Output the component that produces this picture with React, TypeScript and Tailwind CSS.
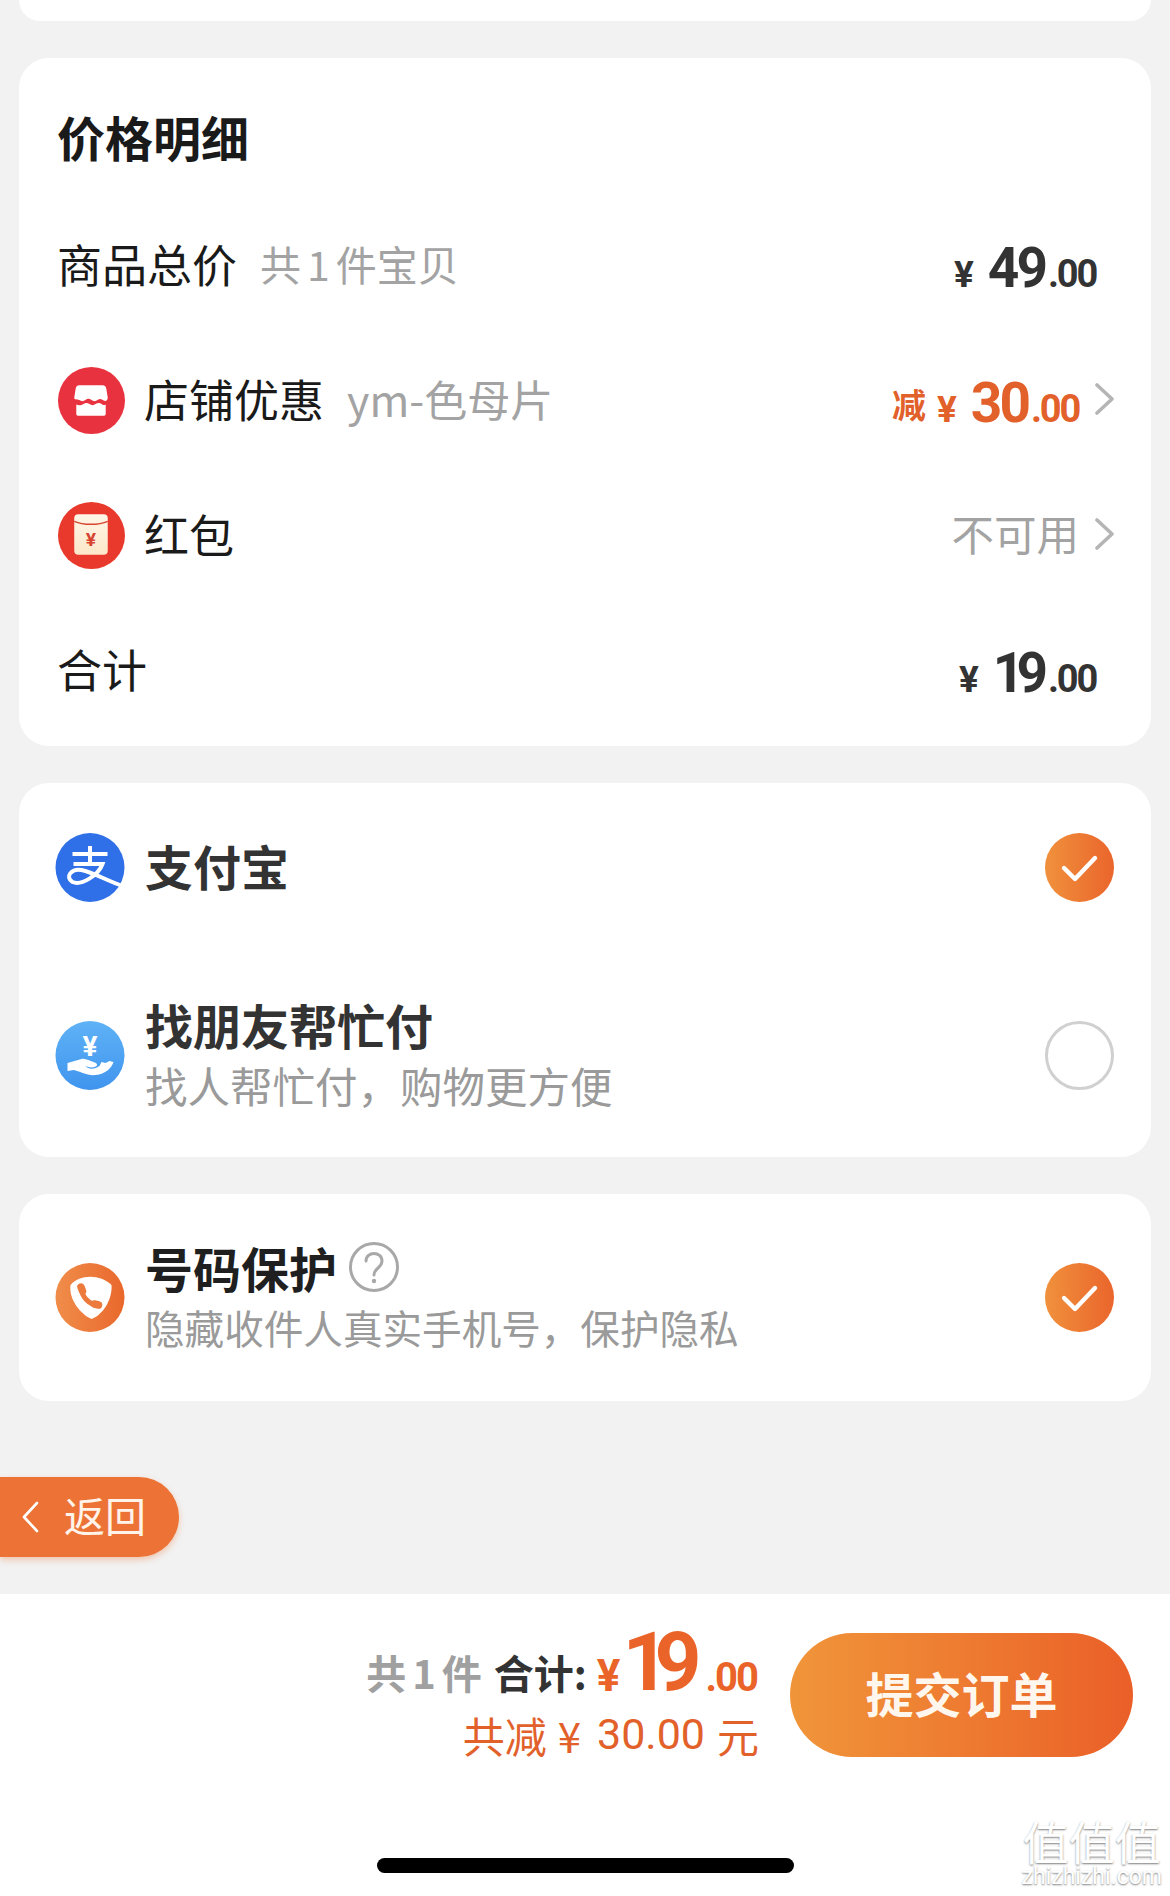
import React from "react";

const CJK = "font-['Noto_Sans_CJK_SC','Noto_Sans',sans-serif]";
const NUM = "font-['Roboto','Noto_Sans_CJK_SC',sans-serif]";

function Price({ big, color }: { big: React.ReactNode; color: string }) {
  return (
    <span className={`${NUM} ${color} flex items-baseline font-bold leading-none`}>
      <span className="mr-[10px] text-[37px]">¥</span>
      <span className="ml-[4px] text-[55px] tracking-[-3px]">{big}</span>
      <span className="ml-[3px] text-[38px] tracking-[-2.2px]">.00</span>
    </span>
  );
}

function Chevron() {
  return (
    <svg viewBox="0 0 19 32" className="mb-[3px] ml-[16px] mr-[-1px] h-[32px] w-[19px]" fill="none">
      <path d="M2 2 L17 16 L2 30" stroke="#b5b5b5" strokeWidth="3.6" strokeLinecap="round" strokeLinejoin="round" />
    </svg>
  );
}

function Check() {
  return (
    <svg viewBox="0 0 69 69" className="h-[69px] w-[69px] shrink-0">
      <defs>
        <linearGradient id="chk" x1="0" y1="0" x2="1" y2="0">
          <stop offset="0" stopColor="#f0913c" />
          <stop offset="1" stopColor="#ea652c" />
        </linearGradient>
      </defs>
      <circle cx="34.5" cy="34.5" r="34.5" fill="url(#chk)" />
      <path d="M19 35 L30 46 L50 25" fill="none" stroke="#fff" strokeWidth="4.4" strokeLinecap="round" strokeLinejoin="round" />
    </svg>
  );
}

function StoreIcon() {
  return (
    <svg viewBox="0 0 66 66" className="ml-[1px] h-[67px] w-[67px] shrink-0">
      <circle cx="33" cy="33" r="33" fill="#e8323f" />
      <path d="M21 18 H44 C46 18 47 19 47.5 21 L49 30 C49 33 47 34 45 33 C43 31.5 41 31 39 32.5 C37 34 35 34 33 32.5 C31 31 29 31 27 32.5 C25 34 23 34 21 32.5 C19 31.5 16 33 16 30 L17.5 21 C18 19 19 18 21 18 Z" fill="#fff" />
      <path d="M18 37 C20 38 23 38 25 36.5 C27 35 29 35 31 36.5 C33 38 35 38 37 36.5 C39 35 41 35 43 36.5 C44 37.5 46 38 47 37 V46 C47 47.5 46 48 45 48 H20 C19 48 18 47.5 18 46 Z" fill="#fff" />
    </svg>
  );
}

function EnvelopeIcon() {
  return (
    <svg viewBox="0 0 66 66" className="ml-[1px] h-[67px] w-[67px] shrink-0">
      <defs>
        <linearGradient id="env" x1="0" y1="0" x2="0" y2="1">
          <stop offset="0" stopColor="#fff6e8" />
          <stop offset="1" stopColor="#fce7c8" />
        </linearGradient>
      </defs>
      <circle cx="33" cy="33" r="33" fill="#e8392c" />
      <rect x="16" y="12" width="33" height="40" rx="4" fill="url(#env)" />
      <path d="M16 19 C25 23 40 23 49 19" fill="none" stroke="#d8432f" strokeWidth="1.4" />
      <text x="32.5" y="43" textAnchor="middle" fontSize="19" fontWeight="700" fill="#d8432f" fontFamily="Roboto, sans-serif">¥</text>
    </svg>
  );
}

function AlipayIcon() {
  return (
    <svg viewBox="0 0 69 69" className="h-[69px] w-[70px] shrink-0">
      <circle cx="34.5" cy="34.5" r="34.5" fill="#2f70e8" />
      <g fill="none" stroke="#fff" strokeWidth="4">
        <path d="M17 21 H52" />
        <path d="M34.5 13 V31" />
        <path d="M18 31 H47 C43 42 26 53 17 49 C9 44 16 35 26 37 C38 39.5 50 47 67 53" />
      </g>
    </svg>
  );
}

function HandIcon() {
  return (
    <svg viewBox="0 0 69 69" className="h-[69px] w-[70px] shrink-0">
      <defs>
        <linearGradient id="hand" x1="0" y1="0" x2="0" y2="1">
          <stop offset="0" stopColor="#5fb2f6" />
          <stop offset="1" stopColor="#3f94ee" />
        </linearGradient>
      </defs>
      <circle cx="34.5" cy="34.5" r="34.5" fill="url(#hand)" />
      <text x="34.5" y="35" textAnchor="middle" fontSize="28" fontWeight="700" fill="#fff" fontFamily="Roboto, sans-serif">¥</text>
      <path d="M12 42 L26 38 C30 37 34 40 38 41 C42 42 43 45 39 46 C36 47 32 46 30 45 C33 49 40 48 44 45 L46 41 L50 42 L54 40 L58 41 C56 47 50 53 40 54 C32 55 24 50 18 49 L12 50 Z" fill="#fff" />
    </svg>
  );
}

function ShieldIcon() {
  return (
    <svg viewBox="0 0 69 69" className="h-[69px] w-[70px] shrink-0">
      <defs>
        <linearGradient id="shd" x1="0" y1="0" x2="1" y2="0">
          <stop offset="0" stopColor="#f08d4a" />
          <stop offset="1" stopColor="#e9682c" />
        </linearGradient>
      </defs>
      <circle cx="34.5" cy="34.5" r="34.5" fill="url(#shd)" />
      <path d="M15 22 C24 11 45 11 56 22 C57 37 47 52 36 56 C26 52 13 37 15 22 Z" fill="#fff" />
      <path d="M26 25 C26 33 33 42 43 42" fill="none" stroke="#ec7a3c" strokeWidth="5" strokeLinecap="round" />
      <path d="M25.5 24 L27 28 M43 42 L39 41" stroke="#ec7a3c" strokeWidth="7.5" strokeLinecap="round" />
    </svg>
  );
}

export default function App() {
  return (
    <div className={`${CJK} relative flex h-[1896px] w-[1170px] flex-col overflow-hidden bg-[#f2f2f2]`}>
      <div className="mx-[19px] h-[21px] shrink-0 rounded-b-[28px] bg-white" />

      {/* price details */}
      <section className="mx-[19px] mt-[37px] shrink-0 rounded-[30px] bg-white pb-[8px] pt-[25px]">
        <div className="flex h-[115px] items-center px-[38px]">
          <h2 className="mb-[10px] text-[48px] font-bold leading-none text-[#1a1a1a]">价格明细</h2>
        </div>
        <div className="flex h-[135px] items-center justify-between px-[38px]">
          <div className="mb-[5px] flex items-center">
            <span className="text-[45px] leading-none text-[#1a1a1a]">商品总价</span>
            <span className="ml-[23px] flex items-center text-[41px] leading-none text-[#a3a3a3]">
              共<span className="mx-[6px]">1</span>件宝贝
            </span>
          </div>
          <div className="mr-[17px] mt-[5px] flex items-center">
            <Price big="49" color="text-[#333333]" />
          </div>
        </div>
        <div className="flex h-[135px] items-center justify-between px-[38px]">
          <div className="flex items-center">
            <StoreIcon />
            <span className="mb-[5px] ml-[19px] text-[45px] leading-none text-[#1a1a1a]">店铺优惠</span>
            <span className="mb-[5px] ml-[23px] text-[43px] leading-none text-[#a3a3a3]">ym-色母片</span>
          </div>
          <div className="flex items-center">
            <span className="mr-[11px] mt-[6px] text-[34px] font-bold leading-none text-[#e2602a]">减</span>
            <span className="mt-[5px]">
              <Price big="30" color="text-[#e2602a]" />
            </span>
            <Chevron />
          </div>
        </div>
        <div className="flex h-[135px] items-center justify-between px-[38px]">
          <div className="flex items-center">
            <EnvelopeIcon />
            <span className="mb-[5px] ml-[19px] text-[45px] leading-none text-[#1a1a1a]">红包</span>
          </div>
          <div className="flex items-center">
            <span className="mb-[5px] text-[42.5px] leading-none text-[#a3a3a3]">不可用</span>
            <Chevron />
          </div>
        </div>
        <div className="flex h-[135px] items-center justify-between px-[38px]">
          <span className="mb-[5px] text-[45px] leading-none text-[#1a1a1a]">合计</span>
          <div className="mr-[17px] mt-[5px] flex items-center">
            <Price
              big={
                <>
                  <span className="tracking-[-8px]">1</span>9
                </>
              }
              color="text-[#333333]"
            />
          </div>
        </div>
      </section>

      {/* payment */}
      <section className="mx-[19px] mt-[37px] h-[374px] shrink-0 rounded-[30px] bg-white pl-[36px] pr-[37px]">
        <div className="flex h-[168px] items-center justify-between">
          <div className="flex items-center">
            <AlipayIcon />
            <span className="mb-[5px] ml-[20px] text-[48px] font-bold leading-none text-[#333333]">支付宝</span>
          </div>
          <Check />
        </div>
        <div className="mt-[2px] flex h-[204px] items-center justify-between">
          <div className="flex items-center">
            <HandIcon />
            <div className="mb-[3px] ml-[20px] flex flex-col">
              <span className="text-[48px] font-bold leading-none text-[#333333]">找朋友帮忙付</span>
              <span className="mt-[16px] text-[42.5px] leading-none text-[#9a9a9a]">找人帮忙付，购物更方便</span>
            </div>
          </div>
          <div className="h-[69px] w-[69px] rounded-full border-[3px] border-[#d0d0d0]" />
        </div>
      </section>

      {/* number protection */}
      <section className="mx-[19px] mt-[37px] flex h-[207px] shrink-0 items-center justify-between rounded-[30px] bg-white pl-[36px] pr-[37px]">
        <div className="flex items-center">
          <ShieldIcon />
          <div className="mb-[6px] ml-[20px] flex flex-col">
            <div className="flex items-center">
              <span className="text-[48px] font-bold leading-none text-[#1f1f1f]">号码保护</span>
              <svg viewBox="0 0 50 50" className="ml-[12px] h-[50px] w-[50px]" fill="none">
                <circle cx="25" cy="25" r="23.5" stroke="#a8a8a8" strokeWidth="3" />
                <path d="M17 19 C17 9 33 9 33 19 C33 26 25 26 25 33" stroke="#a8a8a8" strokeWidth="3" strokeLinecap="round" />
                <circle cx="25" cy="39" r="2.2" fill="#a8a8a8" />
              </svg>
            </div>
            <span className="mt-[15px] text-[39.6px] leading-none text-[#9a9a9a]">隐藏收件人真实手机号，保护隐私</span>
          </div>
        </div>
        <Check />
      </section>

      {/* back */}
      <div className="mt-[76px] flex h-[80px] w-[179px] shrink-0 items-center rounded-r-[40px] bg-[#ec7335] shadow-[0_3px_6px_rgba(236,115,53,0.35)]">
        <svg viewBox="0 0 18 32" className="ml-[21px] h-[32px] w-[18px]" fill="none">
          <path d="M16 2 L3 16 L16 30" stroke="#fff" strokeWidth="2.6" strokeLinecap="round" strokeLinejoin="round" />
        </svg>
        <span className="mb-[5px] ml-[25px] text-[41px] leading-none text-[#fff3ea]">返回</span>
      </div>

      {/* bottom bar */}
      <footer className="mt-[37px] flex flex-1 flex-col bg-white">
        <div className="mt-[39px] flex items-start justify-end pr-[37px]">
          <div className="mr-[33px] flex flex-col items-end">
            <div className="flex h-[65px] items-end font-bold leading-none">
              <span className="mb-[6px] flex items-center text-[40px] text-[#a0a0a0]">
                共<span className="mx-[6px]">1</span>件
              </span>
              <span className="mb-[6px] ml-[12px] text-[40px] text-[#333333]">合计:</span>
              <span className={`${NUM} ml-[10px] text-[44px] leading-[1] text-[#ea6429]`}>¥</span>
              <span className={`${NUM} ml-[2px] text-[82px] leading-[0.85] tracking-[-7px] text-[#ea6429]`}>
                <span className="tracking-[-15px]">1</span>9
              </span>
              <span className={`${NUM} ml-[11px] text-[40px] leading-[1] tracking-[-2px] text-[#ea6429]`}>.00</span>
            </div>
            <div className="mr-[-2px] mt-[15px] flex items-center text-[42px] leading-none text-[#e2602a]">
              <span>共减</span>
              <span className="ml-[11px]">¥</span>
              <span className={`${NUM} ml-[16px] text-[43px]`}>30.00</span>
              <span className="ml-[12px]">元</span>
            </div>
          </div>
          <button className="flex h-[124px] w-[343px] items-center justify-center rounded-[62px] bg-gradient-to-r from-[#f0953a] to-[#ea5f28] pb-[6px] text-[48px] font-bold leading-none text-[#fff7ee]">
            提交订单
          </button>
        </div>
        <div className="mx-auto mt-[101px] h-[15px] w-[417px] rounded-full bg-black" />
      </footer>

      {/* watermark */}
      <div className="absolute bottom-[8px] right-[8px] flex flex-col items-center text-white [text-shadow:0_1px_2px_rgba(0,0,0,0.5)]">
        <span className="text-[46px] leading-[52px]">值值值</span>
        <span className="font-['Roboto',sans-serif] text-[23px] leading-[22px]">zhizhizhi.com</span>
      </div>
    </div>
  );
}
